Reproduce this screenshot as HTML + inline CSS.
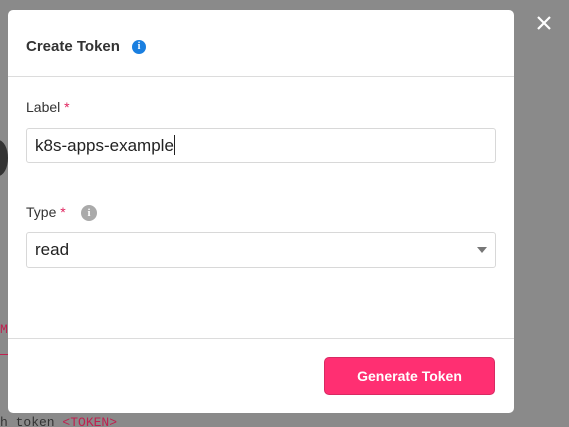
<!DOCTYPE html>
<html><head><style>
html,body{margin:0;padding:0;width:569px;height:427px;overflow:hidden;background:#8a8a8a;font-family:"Liberation Sans",sans-serif;position:relative}
.modal{position:absolute;left:8px;top:10px;width:506px;height:403px;background:#fff;border-radius:5px}
.hd{position:absolute;left:18px;top:28px;font-size:15px;font-weight:bold;color:#333}
.info{position:absolute;left:124px;top:30px;width:14px;height:14px;border-radius:50%;background:#1a7fe0;color:#fff;font:bold 10px "Liberation Serif",serif;text-align:center;line-height:14px}
.line{position:absolute;left:0;width:506px;height:1px;background:#dcdcdc}
.lbl{position:absolute;left:18px;font-size:14px;color:#333}
.lbl b{color:#e0245e;font-weight:normal}
.inp{position:absolute;left:18px;width:470px;height:35px;border:1px solid #d8d8d8;border-radius:3px;box-sizing:border-box;font-size:17px;color:#222;padding-left:8px;line-height:33px}
.gi{position:absolute;left:73px;top:195px;width:16px;height:16px;border-radius:50%;background:#aaa;color:#fff;font:bold 11px "Liberation Serif",serif;text-align:center;line-height:16px}
.btn{position:absolute;left:316px;top:347px;width:171px;height:38px;background:#ff2f72;border:1px solid #d82a63;box-sizing:border-box;border-radius:5px;color:#fff;font-weight:bold;font-size:14px;text-align:center;line-height:36px}
</style></head><body>
<div style="position:absolute;left:-12px;top:140px;width:20px;height:36px;border-radius:50%;background:#333"></div>
<div style="position:absolute;left:0;top:322px;color:#c0204f;font:13px 'Liberation Mono',monospace">M</div>
<div style="position:absolute;left:0;top:354px;width:8px;height:1px;background:#c0204f"></div>
<div style="position:absolute;left:0;top:415px;color:#333;font:13px 'Liberation Mono',monospace;white-space:nowrap">h token <span style="color:#c0204f">&lt;TOKEN&gt;</span></div>
<div class="modal">
<div class="hd">Create Token</div><div class="info">i</div>
<div class="line" style="top:66px"></div>
<div class="lbl" style="top:89px">Label <b>*</b></div>
<div class="inp" style="top:118px">k8s-apps-example<span style="display:inline-block;width:1px;height:20px;background:#222;vertical-align:-4px"></span></div>
<div class="lbl" style="top:194px">Type <b>*</b></div><div class="gi">i</div>
<div class="inp" style="top:222px;height:36px">read<span style="position:absolute;right:8px;top:14px;border-left:5px solid transparent;border-right:5px solid transparent;border-top:6px solid #777"></span></div>
<div class="line" style="top:328px"></div>
<div class="btn">Generate Token</div>
</div>
<svg style="position:absolute;left:536px;top:15px" width="16" height="16"><path d="M2 2L14 14M14 2L2 14" stroke="#fff" stroke-width="2.2"/></svg>
</body></html>
